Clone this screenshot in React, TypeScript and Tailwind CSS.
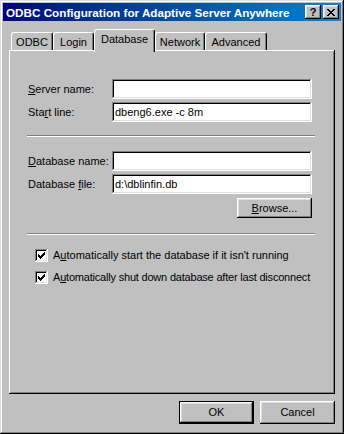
const raised =
  'shadow-[inset_-1px_-1px_#000,inset_1px_1px_#fff,inset_-2px_-2px_#808080,inset_2px_2px_#dfdfdf]';
const sunken =
  'shadow-[inset_-1px_-1px_#fff,inset_1px_1px_#808080,inset_-2px_-2px_#dfdfdf,inset_2px_2px_#000]';

const tabs = [
  { label: 'ODBC', w: 'w-[42px]' },
  { label: 'Login', w: 'w-[41px]' },
  { label: 'Database', w: 'w-[61px]', active: true },
  { label: 'Network', w: 'w-[50px]' },
  { label: 'Advanced', w: 'w-[62px]' },
];

function CheckMark() {
  // 7x7 pixel check like the classic one
  const px = [
    [6, 0], [5, 1], [6, 1], [0, 2], [4, 2], [5, 2], [6, 2],
    [0, 3], [1, 3], [3, 3], [4, 3], [5, 3],
    [0, 4], [1, 4], [2, 4], [3, 4], [4, 4],
    [1, 5], [2, 5], [3, 5], [2, 6],
  ];
  return (
    <svg width="7" height="7" viewBox="0 0 7 7" shapeRendering="crispEdges">
      {px.map(([x, y], i) => (
        <rect key={i} x={x} y={y} width="1" height="1" fill="#000" />
      ))}
    </svg>
  );
}

function Field({ value }: { value?: string }) {
  return (
    <div className={`w-[200px] h-[20px] bg-white ${sunken} flex items-center pl-[3px] pt-[1px] text-black`}>
      {value}
    </div>
  );
}

function Row({ label, value }: { label: React.ReactNode; value?: string }) {
  return (
    <div className="flex items-center justify-between h-[20px]">
      <span>{label}</span>
      <Field value={value} />
    </div>
  );
}

function Separator() {
  return <div className="h-[2px] ml-[-1px] mr-[-3px] border-t border-t-[#808080] border-b border-b-white" />;
}

function Check({ children, tight }: { children: React.ReactNode; tight?: boolean }) {
  return (
    <div className="flex items-center h-[13px] ml-[7px] gap-[5px] whitespace-nowrap">
      <div className={`w-[13px] h-[13px] shrink-0 bg-white ${sunken} flex items-center justify-center`}>
        <CheckMark />
      </div>
      <span className={tight ? 'leading-[13px] tracking-[-0.2px]' : 'leading-[13px]'}>{children}</span>
    </div>
  );
}

export default function App() {
  return (
    <div
      className={`w-[344px] h-[434px] bg-[#c0c0c0] p-[3px] flex flex-col text-[11px] leading-[13px] text-black font-['Liberation_Sans',Arial,sans-serif] shadow-[inset_-1px_-1px_#000,inset_1px_1px_#dfdfdf,inset_-2px_-2px_#808080,inset_2px_2px_#fff]`}
    >
      {/* Title bar */}
      <div className="h-[18px] flex items-center justify-between pl-[3px] pr-[2px] bg-gradient-to-r from-[#000080] to-[#1084d0]">
        <span className="text-white font-bold text-[11.7px] whitespace-nowrap">ODBC Configuration for Adaptive Server Anywhere</span>
        <div className="flex gap-[2px]">
          <div className={`w-[16px] h-[14px] bg-[#c0c0c0] ${raised} flex items-center justify-center font-bold text-[11px] leading-none pt-[1px]`}>
            ?
          </div>
          <div className={`w-[16px] h-[14px] bg-[#c0c0c0] ${raised} flex items-center justify-center`}>
            <svg width="8" height="7" viewBox="0 0 8 7" shapeRendering="crispEdges">
              {[
                [0, 0], [1, 0], [6, 0], [7, 0],
                [1, 1], [2, 1], [5, 1], [6, 1],
                [2, 2], [3, 2], [4, 2], [5, 2],
                [3, 3], [4, 3],
                [2, 4], [3, 4], [4, 4], [5, 4],
                [1, 5], [2, 5], [5, 5], [6, 5],
                [0, 6], [1, 6], [6, 6], [7, 6],
              ].map(([x, y], i) => (
                <rect key={i} x={x} y={y} width="1" height="1" fill="#000" />
              ))}
            </svg>
          </div>
        </div>
      </div>

      <div className="flex-1 flex flex-col px-[6px] pt-[8px]">
        {/* Tabs */}
        <div className="relative z-10 flex items-end h-[21px] pl-[2px]">
          {tabs.map((t) =>
            t.active ? (
              <div
                key={t.label}
                className={`${t.w} h-[23px] -mb-[2px] bg-[#c0c0c0] rounded-t-[3px] border-t border-l border-white shadow-[inset_-1px_0_#808080] border-r border-r-black flex items-start justify-center pt-[3px]`}
              >
                {t.label}
              </div>
            ) : (
              <div
                key={t.label}
                className={`${t.w} h-[18px] bg-[#c0c0c0] rounded-t-[3px] border-t border-l border-white shadow-[inset_-1px_0_#808080] border-r border-r-black flex items-center justify-center pt-[1px]`}
              >
                {t.label}
              </div>
            )
          )}
        </div>

        {/* Panel */}
        <div className="h-[344px] pt-[29px] pl-[19px] pr-[23px] shadow-[inset_-1px_-1px_#000,inset_1px_1px_#fff,inset_-2px_-2px_#808080] flex flex-col">
          <Row label={<><u>S</u>erver name:</>} />
          <div className="mt-[3px]">
            <Row label={<>Sta<u>r</u>t line:</>} value="dbeng6.exe -c 8m" />
          </div>
          <div className="mt-[13px]">
            <Separator />
          </div>
          <div className="mt-[14px]">
            <Row label={<><u>D</u>atabase name:</>} />
          </div>
          <div className="mt-[3px]">
            <Row label={<>Database <u>f</u>ile:</>} value={'d:\\dblinfin.db'} />
          </div>
          <div className="mt-[4px] flex justify-end">
            <div className={`w-[75px] h-[20px] ${raised} flex items-center justify-center`}>
              <span><u>B</u>rowse...</span>
            </div>
          </div>
          <div className="mt-[15px]">
            <Separator />
          </div>
          <div className="mt-[14px] flex flex-col gap-[9px]">
            <Check>
              A<u>u</u>tomatically start the database if it isn't running
            </Check>
            <Check tight>
              A<u>u</u>tomatically shut down database after last disconnect
            </Check>
          </div>
        </div>

        {/* Buttons */}
        <div className="mt-[7px] flex justify-end gap-[6px]">
          <div className="w-[75px] h-[23px] border border-black">
            <div className={`w-full h-full ${raised} flex items-center justify-center`}>OK</div>
          </div>
          <div className={`w-[75px] h-[23px] ${raised} flex items-center justify-center`}>Cancel</div>
        </div>
      </div>
    </div>
  );
}
